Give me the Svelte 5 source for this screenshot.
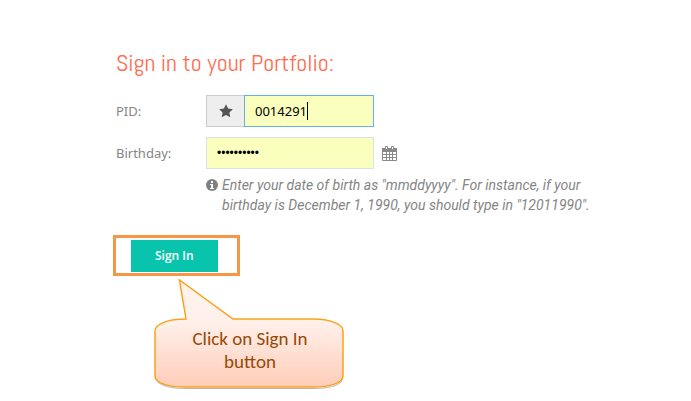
<script lang="ts">
	let pid = $state('0014291');
	let birthday = $state('1201199000');

	function handleSubmit(event: SubmitEvent) {
		event.preventDefault();
	}
</script>

<main class="signin">
	<h1 class="signin__title">Sign in to your Portfolio:</h1>

	<form class="signin__form" onsubmit={handleSubmit}>
		<div class="field">
			<label class="field__label" for="pid">PID:</label>
			<div class="field__control">
				<span class="field__addon">
					<svg width="14" height="14" viewBox="0 0 14 14" aria-hidden="true">
						<path
							fill="#555"
							d="M7 .2l2.100 4.400 4.700.6-3.400 3.300.9 4.800L7 11l-4.300 2.300.9-4.800L.2 5.200l4.700-.6z"
						/>
					</svg>
				</span>
				<div class="field__focus">
					<input id="pid" class="field__input field__input--active" type="text" bind:value={pid} />
					<span class="field__caret"><span class="field__ghost">{pid}</span></span>
				</div>
			</div>
		</div>

		<div class="field">
			<label class="field__label" for="birthday">Birthday:</label>
			<div class="field__control">
				<input
					id="birthday"
					class="field__input field__input--password"
					type="password"
					bind:value={birthday}
				/>
			</div>
			<button class="field__calendar" type="button" aria-label="Pick a date">
				<svg width="15" height="15" viewBox="0 0 15 15" aria-hidden="true">
					<path
						fill="none"
						stroke="#888"
						d="M.5 3v11.500h14V3M1 8.500h13M1 11.500h13M4.500 5v9M7.500 5v9M10.500 5v9"
					/>
					<path fill="#888" d="M0 2h15v4H0z" />
					<path fill="#fff" stroke="#888" d="M3.500.5h2v3h-2zM9.500.5h2v3h-2z" />
				</svg>
			</button>
		</div>

		<p class="hint">
			<svg class="hint__icon" width="12" height="12" viewBox="0 0 12 12" aria-hidden="true">
				<circle cx="6" cy="6" r="6" fill="#808080" />
				<path fill="#fff" d="M5 2h2v2H5zM4 5h3v4h1v1H4V9h1V6H4z" />
			</svg>
			<span class="hint__text">
				Enter your date of birth as "mmddyyyy". For instance, if your birthday is December 1, 1990,
				you should type in "12011990".
			</span>
		</p>

		<div class="submit">
			<button class="submit__button" type="submit">Sign In</button>
		</div>
	</form>

	<div class="callout">
		<svg class="callout__shape" width="192" height="114" viewBox="0 0 192 114" aria-hidden="true">
			<defs>
				<linearGradient id="callout-fill" x1="0" y1="0" x2="0" y2="1">
					<stop offset="0" stop-color="#fff2ee" />
					<stop offset="0.4" stop-color="#fff0ea" />
					<stop offset="1" stop-color="#ffcdb8" />
				</linearGradient>
			</defs>
			<path
				fill="none"
				stroke="#b9b4ad"
				d="M3 102c4 5 14 7.500 30 7.500h125c16 0 26-2.500 30-7.500"
			/>
			<path
				fill="url(#callout-fill)"
				stroke="#faa21b"
				stroke-width="1.5"
				d="M32 40L25.500 1L79 40H159C176 40 189 45 189 52V97C189 104 176 108 159 108H31C14 108 1 104 1 97V52C1 45 14 40 32 40Z"
			/>
		</svg>
		<p class="callout__text">Click on Sign In button</p>
	</div>
</main>

<style>
	:global(body) {
		margin: 0;
		background: #fff;
	}

	.signin {
		box-sizing: border-box;
		max-width: 640px;
		padding: 47px 20px 0 116px;
		color: #858585;
		font-family: 'Noto Sans', 'Open Sans', sans-serif;
		font-size: 13px;
		line-height: 20px;
	}

	.signin__title {
		margin: 0 0 16px;
		color: #ff6c50;
		font-family: 'Abel', 'Liberation Sans Narrow', 'Open Sans', sans-serif;
		font-size: 24px;
		font-weight: 400;
		line-height: 32px;
	}

	.field {
		display: flex;
		align-items: center;
		margin-bottom: 10px;
	}

	.field__label {
		width: 90px;
	}

	.field__control {
		display: flex;
		width: 168px;
	}

	.field__addon {
		display: flex;
		flex: none;
		align-items: center;
		justify-content: center;
		box-sizing: border-box;
		width: 38px;
		border: 1px solid #ccc;
		border-right: 0;
		background: #eee;
	}

	.field__focus {
		position: relative;
		flex: 1;
		min-width: 0;
	}

	.field__input {
		box-sizing: border-box;
		width: 100%;
		height: 32px;
		padding: 0 10px;
		border: 1px solid #d5e3e6;
		border-radius: 0;
		outline: 0;
		background: #faffbd;
		color: #000;
		font: inherit;
	}

	.field__input--active {
		border-color: #66afe9;
	}

	.field__input--password {
		font-family: 'Liberation Sans', sans-serif;
		font-size: 12px;
	}

	.field__caret {
		position: absolute;
		top: 7px;
		left: 11px;
		height: 18px;
		border-right: 1px solid #000;
		pointer-events: none;
	}

	.field__ghost {
		visibility: hidden;
	}

	.field__calendar {
		display: flex;
		margin-left: 8px;
		padding: 0;
		border: 0;
		background: none;
		cursor: pointer;
	}

	.hint {
		display: flex;
		gap: 4px;
		max-width: 384px;
		margin: -4px 0 0 90px;
		font-family: 'Roboto', 'Noto Sans', sans-serif;
		font-size: 14px;
		font-style: italic;
	}

	.hint__icon {
		flex: none;
		margin-top: 4px;
	}

	.submit {
		width: fit-content;
		margin: 20px 0 0 -3px;
		padding: 2px 19px 1px 15px;
		border: 3px solid #f79646;
	}

	.submit__button {
		display: block;
		height: 32px;
		padding: 0 24px;
		border: 0;
		background: #08c4ac;
		color: #fff;
		font: inherit;
		font-family: 'Open Sans', 'Noto Sans', sans-serif;
		font-size: 12px;
		font-weight: 600;
		cursor: pointer;
	}

	.callout {
		position: relative;
		width: 192px;
		height: 114px;
		margin: 3px 0 0 38px;
	}

	.callout__shape {
		position: absolute;
		inset: 0;
	}

	.callout__text {
		position: relative;
		margin: 0;
		padding: 48px 34px 0;
		color: #974806;
		font-family: 'Carlito', 'Calibri', 'Lato', sans-serif;
		font-size: 19px;
		line-height: 23px;
		text-align: center;
	}
</style>
